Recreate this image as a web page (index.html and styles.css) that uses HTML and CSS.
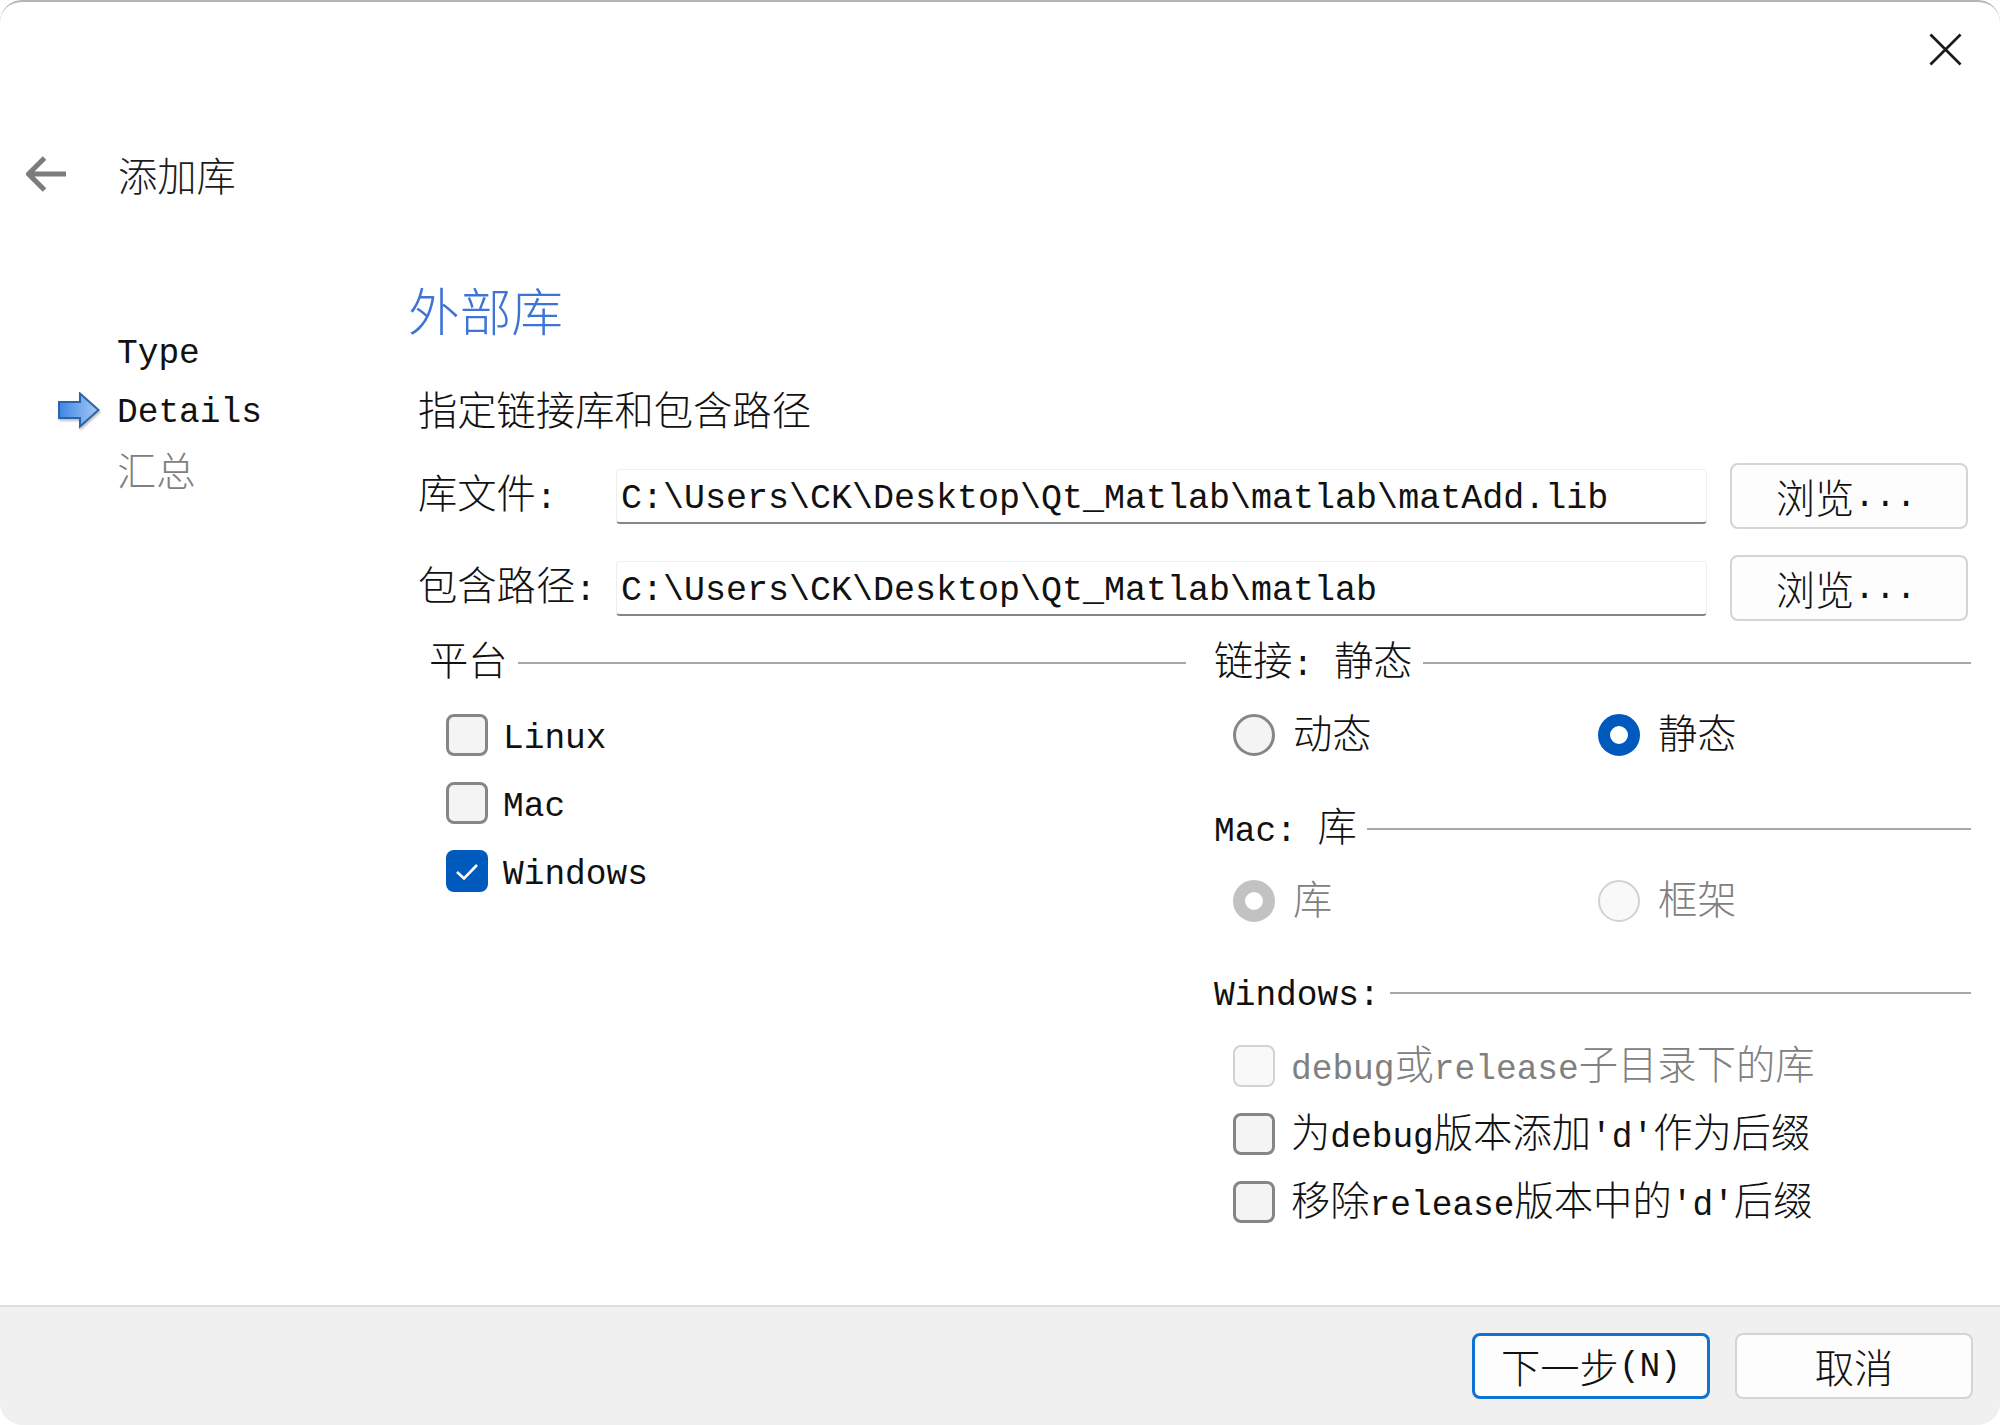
FILE: index.html
```html
<!DOCTYPE html>
<html lang="zh-CN">
<head>
<meta charset="utf-8">
<title>添加库</title>
<link rel="stylesheet" href="styles.css">
</head>
<body>
<div class="window">
  <div class="topbar">
    <svg class="close" viewBox="0 0 34 34"><path d="M1.5 1.5 32.5 32.5M32.5 1.5 1.5 32.5"/></svg>
  </div>
  <div class="header">
    <svg class="back" viewBox="0 0 40 36"><path d="M18.5 2 2.5 18 18.5 34M3 18H40"/></svg>
    <div class="title zh">添加库</div>
  </div>
  <div class="main">
    <div class="sidebar">
      <div class="step">Type</div>
      <div class="step current">
        <svg class="step-arrow" viewBox="0 0 42 37">
          <defs><linearGradient id="ag" x1="0" y1="0" x2="1" y2="0"><stop offset="0" stop-color="#3f86e6"/><stop offset="1" stop-color="#a6c9f2"/></linearGradient></defs>
          <path d="M1 10H22V1.5L40.5 18 22 34.500V26H1Z" fill="url(#ag)" stroke="#2c64a8" stroke-width="2"/>
        </svg>
        Details
      </div>
      <div class="step pending"><span class="z">汇总</span></div>
    </div>
    <div class="content">
      <h1 class="heading zh">外部库</h1>
      <div class="subtitle zh">指定链接库和包含路径</div>
      <div class="form">
        <div class="label"><span class="z">库文件</span>:</div>
        <div class="input">C:\Users\CK\Desktop\Qt_Matlab\matlab\matAdd.lib</div>
        <div class="button browse"><span class="z">浏览</span>...</div>
        <div class="label"><span class="z">包含路径</span>:</div>
        <div class="input">C:\Users\CK\Desktop\Qt_Matlab\matlab</div>
        <div class="button browse"><span class="z">浏览</span>...</div>
      </div>
      <div class="groups">
        <div class="group-left">
          <div class="group-title inset"><span><span class="z">平台</span></span></div>
          <div class="checks left-checks">
            <div class="opt"><span class="box"></span><span class="text">Linux</span></div>
            <div class="opt"><span class="box"></span><span class="text">Mac</span></div>
            <div class="opt"><span class="box on"><svg viewBox="0 0 42 42"><path d="M11 22 18 28.500 31 15"/></svg></span><span class="text">Windows</span></div>
          </div>
        </div>
        <div class="group-right">
          <div class="group-title"><span><span class="z">链接</span>: <span class="z">静态</span></span></div>
          <div class="radios">
            <div class="opt"><span class="radio"></span><span class="text"><span class="z">动态</span></span></div>
            <div class="opt"><span class="radio on"></span><span class="text"><span class="z">静态</span></span></div>
          </div>
          <div class="group-title second"><span>Mac: <span class="z">库</span></span></div>
          <div class="radios">
            <div class="opt disabled"><span class="radio on"></span><span class="text"><span class="z">库</span></span></div>
            <div class="opt disabled"><span class="radio"></span><span class="text"><span class="z">框架</span></span></div>
          </div>
          <div class="group-title third"><span>Windows:</span></div>
          <div class="checks right-checks">
            <div class="opt disabled"><span class="box"></span><span class="text">debug<span class="z">或</span>release<span class="z">子目录下的库</span></span></div>
            <div class="opt"><span class="box"></span><span class="text"><span class="z">为</span>debug<span class="z">版本添加</span>'d'<span class="z">作为后缀</span></span></div>
            <div class="opt"><span class="box"></span><span class="text"><span class="z">移除</span>release<span class="z">版本中的</span>'d'<span class="z">后缀</span></span></div>
          </div>
        </div>
      </div>
    </div>
  </div>
  <div class="footer">
    <div class="button primary"><span class="z">下一步</span>(N)</div>
    <div class="button"><span class="z">取消</span></div>
  </div>
</div>
</body>
</html>
```
FILE: styles.css
```css
* { box-sizing: border-box; }
html, body { margin: 0; padding: 0; background: #fff; }
body {
  width: 2000px;
  height: 1425px;
  overflow: hidden;
  font-family: "Liberation Mono", "Noto Sans CJK SC", monospace;
  font-size: 34.5px;
  color: #111;
}
.z, .zh {
  font-family: "Noto Sans CJK SC", "Liberation Sans", sans-serif;
  font-size: 39.3px;
  font-weight: 300;
}
.z { line-height: 0; }
.window {
  display: flex;
  flex-direction: column;
  height: 1425px;
  border-top: 2px solid #b4b4b4;
  border-radius: 22px;
  background: #fff;
  overflow: hidden;
}
.topbar {
  display: flex;
  justify-content: flex-end;
  height: 146px;
  padding: 31px 38px 0 0;
}
.close { width: 33px; height: 33px; }
.close path { fill: none; stroke: #1a1a1a; stroke-width: 2.8; }
.header {
  display: flex;
  align-items: center;
  height: 52px;
  padding-left: 26px;
}
.back { width: 40px; height: 36px; margin-right: 52px; }
.back path { fill: none; stroke: #7c7c7c; stroke-width: 5; }
.title { line-height: 52px; color: #1c1c1c; }
.main { flex: 1; display: flex; min-height: 0; }
.sidebar { width: 408px; padding: 124px 0 0 117px; }
.step {
  position: relative;
  height: 59px;
  line-height: 59px;
  white-space: nowrap;
}
.step.pending { padding-top: 5px; color: #808080; }
.step-arrow {
  position: absolute;
  left: -59px;
  top: 9px;
  width: 42px;
  height: 37px;
  filter: drop-shadow(1px 2px 1px rgba(0, 0, 0, .25));
}
.content { flex: 1; }
.heading {
  margin: 76px 0 0;
  height: 66px;
  line-height: 66px;
  font-size: 51.7px;
  font-weight: 300;
  color: #3f74d6;
}
.subtitle {
  margin: 37px 0 0 10px;
  height: 58px;
  line-height: 58px;
}
.form {
  display: grid;
  grid-template-columns: 198px 1091px 261px;
  row-gap: 26px;
  margin: 26px 0 0 10px;
  align-items: center;
}
.label { white-space: nowrap; padding-top: 5px; }
.input {
  height: 55px;
  line-height: 58px;
  padding-left: 4px;
  background: #fff;
  border: 1px solid #efefef;
  border-bottom: 2px solid #868686;
  border-radius: 4px;
  white-space: nowrap;
  overflow: hidden;
  font-size: 35px;
}
.button {
  display: flex;
  align-items: center;
  justify-content: center;
  height: 66px;
  background: #fdfdfd;
  border: 2px solid #d4d4d4;
  border-radius: 8px;
  white-space: nowrap;
}
.browse { margin-left: 23px; width: 238px; padding-right: 6px; }
.groups {
  display: grid;
  grid-template-columns: 768px 757px;
  column-gap: 28px;
  margin: 20px 0 0 10px;
}
.group-title {
  display: flex;
  align-items: center;
  height: 44px;
  white-space: nowrap;
}
.group-title > span { padding-top: 5px; }
.group-title::after {
  content: "";
  flex: 1;
  height: 2px;
  margin-left: 10px;
  background: #a8a8a8;
}
.group-title.inset { padding-left: 11px; }
.group-title.second { margin-top: 51px; }
.group-title.third { margin-top: 49px; }
.opt {
  display: flex;
  align-items: center;
  height: 42px;
  white-space: nowrap;
}
.opt .text { margin-left: 16px; padding-top: 6px; }
.disabled { color: #808080; }
.checks { display: flex; flex-direction: column; gap: 26px; }
.left-checks { margin: 29px 0 0 28px; }
.left-checks .text { margin-left: 15px; }
.right-checks { margin: 30px 0 0 19px; }
.box {
  flex: none;
  width: 42px;
  height: 42px;
  background: #f4f4f4;
  border: 3px solid #868686;
  border-radius: 8px;
}
.box.on { background: #0059bd; border: 0; }
.box svg { display: block; width: 42px; height: 42px; }
.box path { fill: none; stroke: #fff; stroke-width: 2.6; }
.disabled .box { background: #f9f9f9; border: 2px solid #d2d2d2; }
.radios {
  display: grid;
  grid-template-columns: 365px 1fr;
  margin: 29px 0 0 19px;
}
.radios .text { margin-left: 18px; }
.radio {
  flex: none;
  width: 42px;
  height: 42px;
  border-radius: 50%;
  background: #f4f4f4;
  border: 3px solid #868686;
}
.radio.on { background: #fff; border: 12.500px solid #0059bd; }
.disabled .radio { background: #f9f9f9; border: 2px solid #d2d2d2; }
.disabled .radio.on { background: #fff; border: 12.500px solid #c2c2c2; }
.footer {
  flex: none;
  display: flex;
  justify-content: flex-end;
  gap: 25px;
  height: 120px;
  padding: 26px 27px 0 0;
  background: #f0f0f0;
  border-top: 2px solid #dfdfdf;
}
.footer .button { width: 238px; }
.footer .primary { border: 3px solid #0f73d1; }
```
